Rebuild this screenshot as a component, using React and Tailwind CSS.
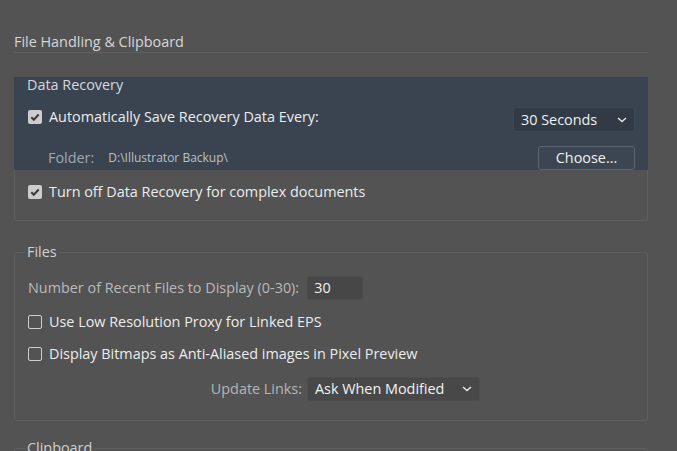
const Chevron = () => (
    <svg width="10" height="6" viewBox="0 0 10 6" fill="none">
        <path d="M1 1l4 3.6L9 1" stroke="#e8e8e8" strokeWidth="1.4" />
    </svg>
)

const Check = ({ checked, label }) => (
    <div className="flex items-center h-[20px]">
        {checked ? (
            <div className="w-[14px] h-[14px] rounded-[2px] bg-[#cdcdcd] flex items-center justify-center">
                <svg width="14" height="14" viewBox="0 0 14 14" fill="none">
                    <path d="M3.3 7.2l2.5 2.6 4.9-5.3" stroke="#3c3c3c" strokeWidth="2" />
                </svg>
            </div>
        ) : (
            <div className="w-[14px] h-[14px] rounded-[2px] border border-[#cfcfcf]" />
        )}
        <span className="ml-[7px] text-[#ececec]">{label}</span>
    </div>
)

const App = () => {
    return (
        <div className="w-[677px] h-[451px] overflow-hidden bg-[#535353] pl-[14px] pr-[29px] pt-[32px] font-['Open_Sans',sans-serif] text-[14.4px] leading-[16px]">
            <div className="h-[21px] leading-[20px] text-[#d6d6d6] border-b border-[#5f5f5f]">File Handling &amp; Clipboard</div>

            {/* data recovery */}
            <div className="mt-[24px] border border-t-0 border-[#5f5f5f] rounded-b-[3px]">
                <div className="bg-[#3a4450] -ml-px -mr-px pl-[14px] pr-[13px]">
                    <div className="h-[16px] -ml-[1px] text-[#d4d8dc]">Data Recovery</div>
                    <div className="mt-[14px] flex items-start justify-between">
                        <Check checked label="Automatically Save Recovery Data Every:" />
                        <div className="w-[122px] h-[25px] rounded-[3px] bg-[#323b45] border border-[#3e4854] flex items-center justify-between pl-[7px] pr-[7px] text-[#f0f0f0]">
                            <span>30 Seconds</span>
                            <Chevron />
                        </div>
                    </div>
                    <div className="mt-[14px] flex items-center justify-between">
                        <div className="flex items-center pl-[20px]">
                            <span className="text-[#9ea7b1]">Folder:</span>
                            <span className="ml-[14px] text-[12px] text-[#b9c0c8]">D:\Illustrator Backup\</span>
                        </div>
                        <div className="w-[97px] h-[24px] rounded-[3px] border border-[#5a6773] bg-[#3c4652] flex items-center justify-center text-[#f0f0f0]">Choose...</div>
                    </div>
                </div>
                <div className="pl-[13px] pt-[12px] pb-[18px]">
                    <Check checked label="Turn off Data Recovery for complex documents" />
                </div>
            </div>

            {/* files */}
            <fieldset className="mt-[23px] border border-[#5f5f5f] rounded-[3px] pl-[13px] pb-[19px]">
                <legend className="-ml-[3px] px-[2px] h-[16px] text-[#d0d0d0]">Files</legend>
                <div className="mt-[16px] flex items-center">
                    <span className="text-[#b9b9b9]">Number of Recent Files to Display (0-30):</span>
                    <div className="ml-[8px] w-[56px] h-[24px] rounded-[3px] bg-[#474747] border border-[#4c4c4c] flex items-center pl-[6px] text-[#f2f2f2]">30</div>
                </div>
                <div className="mt-[12px]">
                    <Check label="Use Low Resolution Proxy for Linked EPS" />
                </div>
                <div className="mt-[12px]">
                    <Check label="Display Bitmaps as Anti-Aliased images in Pixel Preview" />
                </div>
                <div className="mt-[13px] flex items-center">
                    <span className="w-[274px] text-right text-[#b5b5b5]">Update Links:</span>
                    <div className="ml-[5px] w-[173px] h-[24px] rounded-[3px] bg-[#484848] border border-[#4d4d4d] flex items-center justify-between pl-[7px] pr-[7px] text-[#f2f2f2]">
                        <span>Ask When Modified</span>
                        <Chevron />
                    </div>
                </div>
            </fieldset>

            {/* clipboard */}
            <fieldset className="mt-[19px] border border-[#5f5f5f] rounded-[3px] pl-[13px] h-[60px]">
                <legend className="-ml-[3px] px-[2px] h-[16px] text-[#d0d0d0]">Clipboard</legend>
            </fieldset>
        </div>
    )
}

export default App
